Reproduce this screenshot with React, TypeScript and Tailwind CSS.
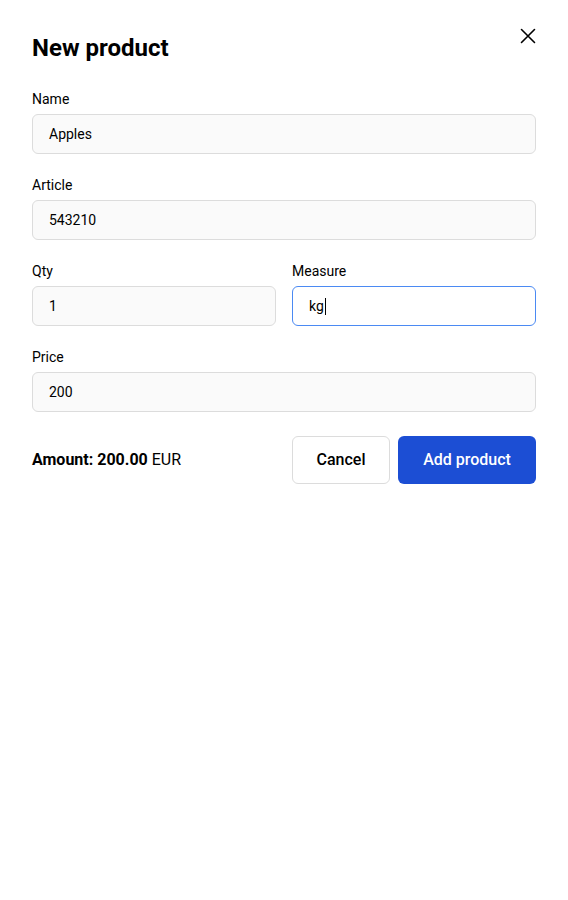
import React from 'react'

type FieldProps = {
    label: string
    value: string
    focused?: boolean
}

const Field = ({ label, value, focused }: FieldProps) => {
    return (
        <div className="flex flex-col">
            <label className="text-sm leading-[21px] mb-[4px] text-black">{label}</label>
            <div
                className={
                    focused
                        ? "h-10 flex items-center px-4 rounded-md border border-[#4b8af3] bg-white text-sm text-black"
                        : "h-10 flex items-center px-4 rounded-md border border-[#dcdcdc] bg-[#fafafa] text-sm text-black"
                }
            >
                {value}
                {focused && <span className="inline-block w-px h-[17px] bg-black ml-px" />}
            </div>
        </div>
    )
}

const App = () => {
    return (
        <div className="w-[568px] min-h-[900px] bg-white font-['Roboto',sans-serif] text-black">
            <div className="px-8 pt-8 relative">
                <button className="absolute right-[32px] top-[28px] text-black" aria-label="Close">
                    <svg width="16" height="16" viewBox="0 0 16 16" fill="none" stroke="currentColor" strokeWidth="1.6" strokeLinecap="round">
                        <path d="M1.5 1.5 L14.5 14.5 M14.5 1.5 L1.5 14.5" />
                    </svg>
                </button>

                <h1 className="text-2xl leading-8 font-bold">New product</h1>

                <div className="mt-[25px] flex flex-col gap-[21px]">
                    <Field label="Name" value="Apples" />
                    <Field label="Article" value="543210" />
                    <div className="grid grid-cols-2 gap-4">
                        <Field label="Qty" value="1" />
                        <Field label="Measure" value="kg" focused />
                    </div>
                    <Field label="Price" value="200" />
                </div>

                <div className="mt-6 flex items-center justify-between">
                    <p className="text-base">
                        <span className="font-bold">Amount: 200.00</span> EUR
                    </p>
                    <div className="flex gap-2">
                        <button className="h-12 w-[98px] rounded-md border border-[#dcdcdc] bg-white text-base font-medium text-black">
                            Cancel
                        </button>
                        <button className="h-12 w-[138px] rounded-md bg-[#1c4ed4] text-base font-medium text-white">
                            Add product
                        </button>
                    </div>
                </div>
            </div>
        </div>
    )
}

export default App
